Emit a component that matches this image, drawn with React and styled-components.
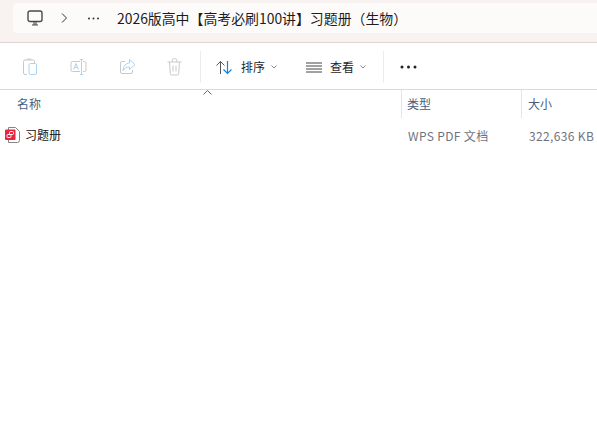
import React from "react";
import styled, { createGlobalStyle } from "styled-components";

const GlobalStyle = createGlobalStyle`
  html, body {
    margin: 0;
    padding: 0;
    background: #fff;
    overflow: hidden;
  }
  body {
    font-family: "Noto Sans CJK SC", "Open Sans", "Liberation Sans", sans-serif;
  }
`;

const Window = styled.div`
  width: 597px;
  height: 448px;
  display: flex;
  flex-direction: column;
  background: #fff;
`;

const TitleBand = styled.header`
  height: 43px;
  flex: none;
  box-sizing: border-box;
  background: #f8f2f0;
  border-bottom: 1px solid #e0d5d3;
  padding: 3px 0 0 13px;
`;

const AddressBar = styled.div`
  height: 30px;
  background: #fdfafa;
  border-radius: 4px 0 0 4px;
  display: flex;
  align-items: center;
  color: #1c1c1c;
`;

const PcSlot = styled.span`
  width: 16px;
  height: 16px;
  margin-left: 14px;
  display: flex;
`;

const Chevron = styled.span`
  width: 8px;
  height: 10px;
  margin-left: 17px;
  display: flex;
`;

const Ellipsis = styled.span`
  width: 13px;
  margin-left: 19px;
  display: flex;
`;

const Crumb = styled.span`
  margin-left: 17px;
  font-size: 13.9px;
  line-height: 18px;
  white-space: nowrap;
`;

const Toolbar = styled.div`
  height: 47px;
  flex: none;
  box-sizing: border-box;
  border-bottom: 1px solid #dcdad9;
  display: flex;
  align-items: center;
  padding: 2px 0 0 22px;
`;

const ActionIcon = styled.span`
  width: 17px;
  height: 18px;
  display: flex;
  margin-right: ${(p) => p.$gap}px;
`;

const Divider = styled.span`
  width: 1px;
  height: 32px;
  background: #ececec;
  flex: none;
`;

const ToolButton = styled.div`
  display: flex;
  align-items: center;
  margin-left: ${(p) => p.$left}px;
  font-size: 12px;
  color: #1f1f1f;
`;

const ToolLabel = styled.span`
  margin-left: ${(p) => p.$gap}px;
  line-height: 16px;
`;

const Caret = styled.span`
  display: flex;
  margin-left: 6px;
`;

const MoreDots = styled.span`
  display: flex;
  margin-left: 16px;
`;

const ColumnHead = styled.div`
  position: relative;
  height: 28px;
  flex: none;
  display: grid;
  grid-template-columns: 402px 120px 1fr;
`;

const HeadCell = styled.div`
  font-size: 12px;
  line-height: 28px;
  color: #46607e;
  padding-left: ${(p) => p.$pad}px;
  border-right: ${(p) => (p.$line ? "1px solid #e5e5e5" : "none")};
`;

const SortArrow = styled.span`
  position: absolute;
  left: 203px;
  top: 0;
  display: flex;
`;

const FileRow = styled.div`
  height: 20px;
  margin-top: 7px;
  display: grid;
  grid-template-columns: 402px 120px 1fr;
  align-items: center;
  font-size: 12px;
`;

const NameCell = styled.div`
  display: flex;
  align-items: center;
  padding-left: 5px;
  color: #111;
`;

const FileName = styled.span`
  margin-left: 5px;
  line-height: 16px;
`;

const MetaCell = styled.div`
  color: #6d7480;
  white-space: nowrap;
  letter-spacing: 0.35px;
  padding-left: ${(p) => p.$pad}px;
`;

const Stroke = styled.svg`
  fill: none;
  stroke-width: 1;
  display: block;
`;

const PdfSvg = styled.svg`
  display: block;
`;

function PcIcon() {
  return (
    <Stroke width="16" height="16" viewBox="0 0 16 16" stroke="#4a4a4a">
      <rect x="1" y="1" width="14" height="10.5" rx="2" strokeWidth="1.4" />
      <path d="M5 15h6M7 12v3M9 12v3" strokeWidth="1.1" />
    </Stroke>
  );
}

function PasteIcon() {
  return (
    <Stroke width="17" height="18" viewBox="0 0 17 18">
      <path d="M5 16.5H3A1.5 1.5 0 0 1 1.5 15V3.5A1.5 1.5 0 0 1 3 2h8a1.5 1.5 0 0 1 1.5 1.5V5M4.5 2a2.5 1 0 0 1 5 0" stroke="#c9c9c9" />
      <rect x="7" y="5.5" width="7.5" height="11" rx="1.5" stroke="#a9d4f5" />
    </Stroke>
  );
}

function RenameIcon() {
  return (
    <Stroke width="17" height="18" viewBox="0 0 17 18">
      <path d="M10 3.5H2.5A1.5 1.5 0 0 0 1 5v7a1.5 1.5 0 0 0 1.5 1.5H10M13 3.5h1.5A1.5 1.5 0 0 1 16 5v7a1.5 1.5 0 0 1-1.5 1.5H13" stroke="#c9c9c9" />
      <path d="M3.5 11.5l2.5-6 2.5 6M4.5 9.5h3" stroke="#a9d4f5" />
      <path d="M11.5 2v14M9.8 1.5h3.4M9.8 16.5h3.4" stroke="#a9d4f5" />
    </Stroke>
  );
}

function ShareIcon() {
  return (
    <Stroke width="17" height="18" viewBox="0 0 17 18">
      <path d="M6 3.5H3A1.5 1.5 0 0 0 1.5 5v9A1.5 1.5 0 0 0 3 15.5h9a1.5 1.5 0 0 0 1.5-1.5v-2" stroke="#c9c9c9" />
      <path d="M10.5 1.5l5.5 5-5.500 5V9C7.500 9 5.500 10 4 12.500c.3-4.500 3-7.500 6.500-7.500z" stroke="#a9d4f5" />
    </Stroke>
  );
}

function TrashIcon() {
  return (
    <Stroke width="17" height="18" viewBox="0 0 17 18" stroke="#c9c9c9">
      <path d="M1.5 4h14M6 4V3a2.5 2.5 0 0 1 5 0v1M3.5 4l.8 11.5A1.5 1.5 0 0 0 5.8 17h5.4a1.5 1.5 0 0 0 1.5-1.5L13.5 4M7 7.5v6M10 7.5v6" />
    </Stroke>
  );
}

function SortIcon() {
  return (
    <Stroke width="17" height="15" viewBox="0 0 17 15">
      <path d="M4.5 14V1.5M.5 5.5l4-4 4 4" stroke="#555" />
      <path d="M11.5 1v12.5M7.5 9.5l4 4 4-4" stroke="#1484e0" strokeWidth="1.2" />
    </Stroke>
  );
}

function ViewIcon() {
  return (
    <Stroke width="16" height="11" viewBox="0 0 16 11" stroke="#444">
      <path d="M0 1h16M0 4h16M0 7h16M0 10h16" />
    </Stroke>
  );
}

function CaretIcon() {
  return (
    <Stroke width="6" height="4" viewBox="0 0 6 4" stroke="#8a8a8a">
      <path d="M.5.5L3 3 5.5.5" />
    </Stroke>
  );
}

function PdfIcon() {
  return (
    <PdfSvg width="15" height="16" viewBox="0 0 15 16">
      <path d="M3.5.5h7l4 4v9a2 2 0 0 1-2 2h-9z" fill="#fff" stroke="#858585" />
      <rect x="0" y="2.5" width="10.5" height="10.5" rx="1" fill="#e8243f" />
      <rect x="4.5" y="4.5" width="4" height="3" rx="1" fill="none" stroke="#fff" />
      <rect x="2" y="7.5" width="4" height="3" rx="1" fill="none" stroke="#fff" />
    </PdfSvg>
  );
}

export default function App() {
  return (
    <Window>
      <GlobalStyle />
      <TitleBand>
        <AddressBar>
          <PcSlot><PcIcon /></PcSlot>
          <Chevron>
            <Stroke width="8" height="10" viewBox="0 0 8 10" stroke="#333">
              <path d="M2 .5L6.5 5 2 9.5" />
            </Stroke>
          </Chevron>
          <Ellipsis>
            <svg width="13" height="3" viewBox="0 0 13 3" fill="#333">
              <circle cx="2" cy="1.5" r="1" />
              <circle cx="6.5" cy="1.5" r="1" />
              <circle cx="11" cy="1.5" r="1" />
            </svg>
          </Ellipsis>
          <Crumb>2026版高中【高考必刷100讲】习题册（生物）</Crumb>
        </AddressBar>
      </TitleBand>
      <Toolbar>
        <ActionIcon $gap={31}><PasteIcon /></ActionIcon>
        <ActionIcon $gap={32}><RenameIcon /></ActionIcon>
        <ActionIcon $gap={30}><ShareIcon /></ActionIcon>
        <ActionIcon $gap={17}><TrashIcon /></ActionIcon>
        <Divider />
        <ToolButton $left={15}>
          <SortIcon />
          <ToolLabel $gap={8}>排序</ToolLabel>
          <Caret><CaretIcon /></Caret>
        </ToolButton>
        <ToolButton $left={29}>
          <ViewIcon />
          <ToolLabel $gap={8}>查看</ToolLabel>
          <Caret><CaretIcon /></Caret>
        </ToolButton>
        <ToolButton $left={17}><Divider /></ToolButton>
        <MoreDots>
          <svg width="17" height="4" viewBox="0 0 17 4" fill="#222">
            <circle cx="2" cy="2" r="1.5" />
            <circle cx="8.5" cy="2" r="1.5" />
            <circle cx="15" cy="2" r="1.5" />
          </svg>
        </MoreDots>
      </Toolbar>
      <ColumnHead>
        <SortArrow>
          <Stroke width="9" height="5" viewBox="0 0 9 5" stroke="#666">
            <path d="M.5 4.5L4.500.5 8.500 4.500" />
          </Stroke>
        </SortArrow>
        <HeadCell $pad={17} $line>名称</HeadCell>
        <HeadCell $pad={5} $line>类型</HeadCell>
        <HeadCell $pad={6}>大小</HeadCell>
      </ColumnHead>
      <FileRow>
        <NameCell>
          <PdfIcon />
          <FileName>习题册</FileName>
        </NameCell>
        <MetaCell $pad={6}>WPS PDF 文档</MetaCell>
        <MetaCell $pad={7}>322,636 KB</MetaCell>
      </FileRow>
    </Window>
  );
}
